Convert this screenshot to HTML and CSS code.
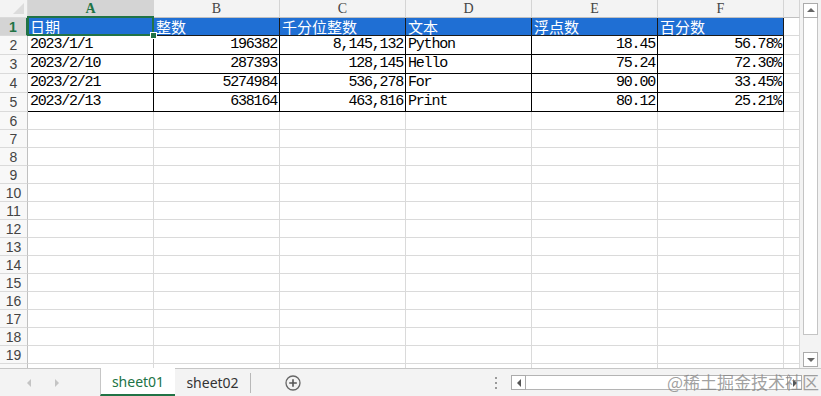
FILE: index.html
```html
<!DOCTYPE html>
<html>

<head>
    <meta name="viewport" charset="utf-8" content="width=device-width, initial-scale=1.0" />
    <title>Excel Sheet</title>
    <link rel="stylesheet" href="styles.css">
</head>

<body>
    <div class="app">
        <div class="main">
            <div class="sheet" id="sheet">
                <div class="corner"></div>
                <div class="colhead sel">A</div>
                <div class="colhead">B</div>
                <div class="colhead">C</div>
                <div class="colhead">D</div>
                <div class="colhead">E</div>
                <div class="colhead">F</div>
                <div class="colhead"></div>

                <div class="rowhead sel">1</div>
                <div class="cell title active">日期</div>
                <div class="cell title">整数</div>
                <div class="cell title">千分位整数</div>
                <div class="cell title">文本</div>
                <div class="cell title">浮点数</div>
                <div class="cell title">百分数</div>
                <div class="cell"></div>

                <div class="rowhead">2</div>
                <div class="cell d">2023/1/1</div>
                <div class="cell d num">196382</div>
                <div class="cell d num">8,145,132</div>
                <div class="cell d">Python</div>
                <div class="cell d num">18.45</div>
                <div class="cell d num">56.78%</div>
                <div class="cell"></div>

                <div class="rowhead">3</div>
                <div class="cell d">2023/2/10</div>
                <div class="cell d num">287393</div>
                <div class="cell d num">128,145</div>
                <div class="cell d">Hello</div>
                <div class="cell d num">75.24</div>
                <div class="cell d num">72.30%</div>
                <div class="cell"></div>

                <div class="rowhead">4</div>
                <div class="cell d">2023/2/21</div>
                <div class="cell d num">5274984</div>
                <div class="cell d num">536,278</div>
                <div class="cell d">For</div>
                <div class="cell d num">90.00</div>
                <div class="cell d num">33.45%</div>
                <div class="cell"></div>

                <div class="rowhead">5</div>
                <div class="cell d">2023/2/13</div>
                <div class="cell d num">638164</div>
                <div class="cell d num">463,816</div>
                <div class="cell d">Print</div>
                <div class="cell d num">80.12</div>
                <div class="cell d num">25.21%</div>
                <div class="cell"></div>
            </div>

            <div class="vscroll">
                <div class="sbtn"><span class="tri up"></span></div>
                <div class="vthumb"></div>
                <div class="sbtn"><span class="tri down"></span></div>
            </div>
        </div>

        <div class="tabbar">
            <div class="nav">
                <span class="tri left light"></span>
                <span class="tri right light"></span>
            </div>
            <div class="tab active">sheet01</div>
            <div class="tab">sheet02</div>
            <div class="sep"></div>
            <div class="add">
                <svg width="16" height="16" viewBox="0 0 16 16">
                    <circle cx="8" cy="8" r="7" fill="none" stroke="#666" stroke-width="1.3" />
                    <path d="M8 4.2v7.6M4.2 8h7.6" stroke="#555" stroke-width="1.6" />
                </svg>
            </div>
            <div class="dots"><i></i><i></i><i></i></div>
            <div class="hscroll">
                <div class="sbtn"><span class="tri left"></span></div>
                <div class="htrack"></div>
                <div class="sbtn"><span class="tri right"></span></div>
            </div>
            <div class="watermark">@稀土掘金技术社区</div>
        </div>
    </div>

    <script>
        // 空白行 6 ~ 20 (第20行只露出一点, 不写行号)
        const sheet = document.getElementById('sheet');
        for (let r = 6; r <= 20; r++) {
            const head = document.createElement('div');
            head.className = 'rowhead';
            head.textContent = r < 20 ? r : '';
            sheet.appendChild(head);
            for (let c = 0; c < 7; c++) {
                const cell = document.createElement('div');
                cell.className = 'cell';
                sheet.appendChild(cell);
            }
        }
    </script>
</body>

</html>
```

FILE: styles.css
```css
body {
    margin: 0;
    padding: 0;
    background-color: #ffffff;
    font-family: "Liberation Sans", "Noto Sans CJK SC", sans-serif;
}

.app {
    width: 821px;
    height: 396px;
    display: flex;
    flex-direction: column;
    position: relative;
    overflow: hidden;
}

.main {
    display: flex;
    height: 368px;
}

.sheet {
    width: 800px;
    height: 368px;
    overflow: hidden;
    display: grid;
    grid-template-columns: 28px repeat(6, 126px) 16px;
    grid-template-rows: 18px 18px repeat(4, 19px) repeat(15, 18px);
}

.sheet > div {
    box-sizing: border-box;
    border-right: 1px solid #dadada;
    border-bottom: 1px solid #dadada;
    min-width: 0;
}

.corner {
    background-color: #f3f3f3;
    position: relative;
}

.corner::after {
    content: "";
    position: absolute;
    right: 3px;
    bottom: 3px;
    border-left: 11px solid transparent;
    border-bottom: 11px solid #dcdcdc;
}

.sheet > .colhead {
    background-color: #f3f3f3;
    border-bottom-color: #c0c0c0;
    border-right-color: #d4d4d4;
    color: #444;
    font-family: "Liberation Serif", serif;
    font-size: 14px;
    text-align: center;
    line-height: 18px;
}

.sheet > .colhead.sel {
    background-color: #d4d4d4;
    border-bottom: 2px solid #217346;
    color: #217346;
    font-weight: bold;
    line-height: 17px;
}

.sheet > .rowhead {
    background-color: #f8f8f8;
    border-right-color: #c0c0c0;
    color: #444;
    font-size: 14px;
    text-align: center;
    display: flex;
    align-items: center;
    justify-content: center;
}

.sheet > .rowhead.sel {
    background-color: #d4d4d4;
    border-right: 2px solid #217346;
    color: #217346;
    font-weight: bold;
}

.cell {
    display: flex;
    align-items: flex-end;
    padding: 0 2px 1px 2px;
    font-family: "Liberation Mono", "Noto Sans CJK SC", monospace;
    font-size: 15px;
    letter-spacing: -1.2px;
    line-height: 17px;
    color: #000;
    white-space: nowrap;
}

.sheet > .title {
    background-color: #1f6fd4;
    color: #fff;
    font-family: "Noto Sans CJK SC", sans-serif;
    letter-spacing: 0;
    line-height: 17px;
    padding-bottom: 0;
    border-right-color: #1a1a1a;
    border-bottom-color: #1a1a1a;
}

.sheet > .d {
    border-right-color: #000;
    border-bottom-color: #000;
}

.num {
    justify-content: flex-end;
}

.active {
    position: relative;
}

/* 选中单元格边框 */
.active::after {
    content: "";
    position: absolute;
    left: -1px;
    top: -2px;
    right: -1px;
    bottom: -1px;
    border: 2px solid #217346;
}

.active::before {
    content: "";
    position: absolute;
    right: -4px;
    bottom: -4px;
    width: 5px;
    height: 5px;
    background-color: #217346;
    border: 1px solid #fff;
    z-index: 2;
}

.vscroll {
    width: 21px;
    background-color: #f3f3f3;
    box-sizing: border-box;
    padding: 3px 3px 1px 3px;
    display: flex;
    flex-direction: column;
}

.sbtn {
    width: 15px;
    height: 15px;
    box-sizing: border-box;
    border: 1px solid #ababab;
    background-color: #fff;
    display: flex;
    align-items: center;
    justify-content: center;
}

.vthumb {
    height: 318px;
    box-sizing: border-box;
    border: 1px solid #c4c4c4;
    border-top: none;
    background-color: #fff;
    margin-bottom: 17px;
}

.tri {
    width: 0;
    height: 0;
    display: inline-block;
}

.tri.up {
    border-left: 4px solid transparent;
    border-right: 4px solid transparent;
    border-bottom: 4px solid #666;
}

.tri.down {
    border-left: 4px solid transparent;
    border-right: 4px solid transparent;
    border-top: 4px solid #666;
}

.tri.left {
    border-top: 4px solid transparent;
    border-bottom: 4px solid transparent;
    border-right: 4px solid #555;
}

.tri.right {
    border-top: 4px solid transparent;
    border-bottom: 4px solid transparent;
    border-left: 4px solid #555;
}

.tri.light.left {
    border-right-color: #c4c4c4;
}

.tri.light.right {
    border-left-color: #c4c4c4;
}

.tabbar {
    height: 28px;
    box-sizing: border-box;
    border-top: 1px solid #c6c6c6;
    background-color: #f3f3f3;
    display: flex;
    align-items: stretch;
    font-family: "Noto Sans", sans-serif;
    font-size: 14px;
}

.nav {
    width: 100px;
    display: flex;
    align-items: center;
    gap: 24px;
    padding-left: 27px;
    box-sizing: border-box;
}

.tab {
    width: 75px;
    display: flex;
    align-items: center;
    justify-content: center;
    color: #333;
    box-sizing: border-box;
}

.tab.active {
    background-color: #fff;
    margin-top: -1px;
    border-left: 1px solid #c6c6c6;
    border-bottom: 2px solid #217346;
    color: #217346;
}

.tab.active::after,
.tab.active::before {
    display: none;
}

.sep {
    width: 1px;
    background-color: #b8b8b8;
    margin: 4px 0 3px 0;
}

.add {
    width: 16px;
    margin-left: 34px;
    display: flex;
    align-items: center;
}

.dots {
    margin-left: 194px;
    display: flex;
    flex-direction: column;
    justify-content: center;
    gap: 3px;
}

.dots i {
    display: block;
    width: 2px;
    height: 2px;
    background-color: #9a9a9a;
}

.hscroll {
    margin-left: 14px;
    width: 291px;
    display: flex;
    align-items: center;
}

.htrack {
    flex: 1;
    height: 15px;
    box-sizing: border-box;
    border-top: 1px solid #b4b4b4;
    border-bottom: 1px solid #b4b4b4;
    background-color: #fff;
}

.watermark {
    position: absolute;
    right: 2px;
    bottom: 3px;
    font-family: "Noto Sans CJK SC", sans-serif;
    font-size: 17px;
    line-height: 22px;
    color: rgba(130, 130, 130, 0.75);
}
```
